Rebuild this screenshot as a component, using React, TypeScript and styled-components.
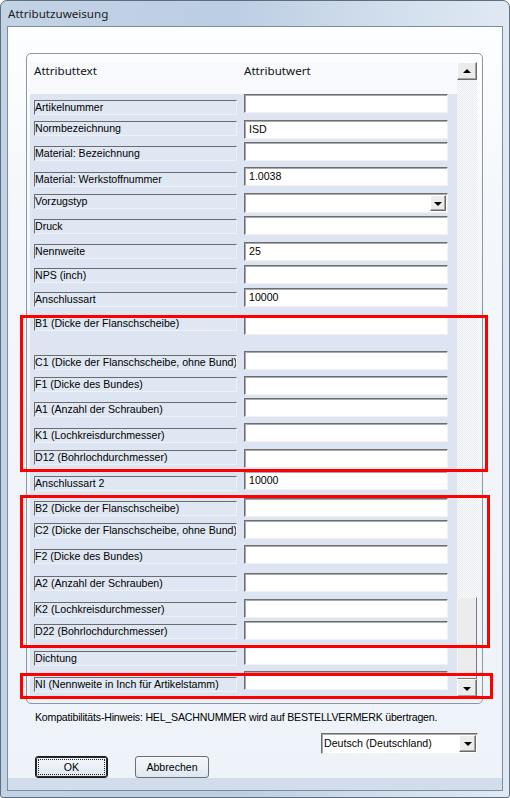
import React from "react";
import styled, { createGlobalStyle } from "styled-components";

const UI_FONT = `"Liberation Sans", Arial, sans-serif`;
const TITLE_FONT = `"Noto Sans", "Liberation Sans", sans-serif`;

type RowData = {
  label: string;
  value?: string;
  labelTop: number;
  inputTop: number;
  combo?: boolean;
};

const ROWS: RowData[] = [
  { label: "Artikelnummer", labelTop: 100, inputTop: 94 },
  { label: "Normbezeichnung", value: "ISD", labelTop: 121, inputTop: 120 },
  { label: "Material: Bezeichnung", labelTop: 146, inputTop: 142 },
  { label: "Material: Werkstoffnummer", value: "1.0038", labelTop: 172, inputTop: 167 },
  { label: "Vorzugstyp", labelTop: 194, inputTop: 193, combo: true },
  { label: "Druck", labelTop: 219, inputTop: 216 },
  { label: "Nennweite", value: "25", labelTop: 244, inputTop: 242 },
  { label: "NPS (inch)", labelTop: 268, inputTop: 265 },
  { label: "Anschlussart", value: "10000", labelTop: 292, inputTop: 288 },
  { label: "B1 (Dicke der Flanschscheibe)", labelTop: 316, inputTop: 316 },
  { label: "C1 (Dicke der Flanschscheibe, ohne Bund)", labelTop: 355, inputTop: 351 },
  { label: "F1 (Dicke des Bundes)", labelTop: 377, inputTop: 376 },
  { label: "A1 (Anzahl der Schrauben)", labelTop: 402, inputTop: 398 },
  { label: "K1 (Lochkreisdurchmesser)", labelTop: 428, inputTop: 423 },
  { label: "D12 (Bohrlochdurchmesser)", labelTop: 450, inputTop: 449 },
  { label: "Anschlussart 2", value: "10000", labelTop: 476, inputTop: 471 },
  { label: "B2 (Dicke der Flanschscheibe)", labelTop: 501, inputTop: 498 },
  { label: "C2 (Dicke der Flanschscheibe, ohne Bund)", labelTop: 523, inputTop: 520 },
  { label: "F2 (Dicke des Bundes)", labelTop: 549, inputTop: 545 },
  { label: "A2 (Anzahl der Schrauben)", labelTop: 576, inputTop: 573 },
  { label: "K2 (Lochkreisdurchmesser)", labelTop: 602, inputTop: 599 },
  { label: "D22 (Bohrlochdurchmesser)", labelTop: 624, inputTop: 621 },
  { label: "Dichtung", labelTop: 651, inputTop: 646 },
  { label: "NI (Nennweite in Inch für Artikelstamm)", labelTop: 677, inputTop: 671 },
];

const LIST_BOTTOM = 697;

const GlobalStyle = createGlobalStyle`
  html, body {
    margin: 0;
    padding: 0;
  }
  body {
    width: 510px;
    height: 798px;
    overflow: hidden;
    background: #ffffff;
    font-family: ${UI_FONT};
  }
`;

const Frame = styled.div`
  position: relative;
  width: 510px;
  height: 798px;
  box-sizing: border-box;
  border: 1px solid #5e6d80;
  border-radius: 7px 7px 3px 3px;
  background: linear-gradient(90deg, #c3d3e6 0%, #bccee3 45%, #d3dfed 78%, #e0e9f3 100%);
  padding: 0 6px 6px 6px;
  display: flex;
  flex-direction: column;
`;

const TitleBar = styled.div`
  height: 25px;
  display: flex;
  align-items: center;
  padding-left: 1px;
  font-family: ${TITLE_FONT};
  font-size: 11.6px;
  color: #1c1c1c;
`;

const Client = styled.div`
  flex: 1;
  border: 1px solid #7f8c9c;
  display: flex;
  flex-direction: column;
  min-height: 0;
`;

const Body = styled.div`
  flex: 1;
  display: flex;
  flex-direction: column;
  padding: 26px 0 0 18px;
  background: linear-gradient(180deg, #fdfeff 0%, #f4f7fb 25%, #eef3f9 100%);
`;

const BottomStrip = styled.div`
  height: 15px;
  background: #d2ddeb;
`;

const Panel = styled.div`
  width: 457px;
  height: 651px;
  box-sizing: border-box;
  border: 1px solid #8d97a3;
  border-radius: 5px;
  padding: 8px 5px 5px 3px;
  display: flex;
`;

const View = styled.div`
  flex: 1;
  display: flex;
  flex-direction: column;
  overflow: hidden;
`;

const Header = styled.div`
  height: 32px;
  display: flex;
  gap: 7px;
  padding: 1px 0 0 4px;
  box-sizing: border-box;
  font-family: ${TITLE_FONT};
  font-size: 11.6px;
  color: #111;
  background: #f7f9fc;
`;

const HeaderCell = styled.div`
  width: ${(p: { $w: number }) => p.$w}px;
  line-height: 15px;
`;

const List = styled.div`
  flex: 1;
  display: flex;
  flex-direction: column;
  background: #dce5f1;
`;

const Row = styled.div<{ $h: number }>`
  height: ${(p) => p.$h}px;
  flex: none;
  display: flex;
  align-items: flex-start;
  gap: 7px;
  padding-left: 4px;
`;

const LabelBox = styled.div<{ $mt: number }>`
  margin-top: ${(p) => p.$mt}px;
  width: 203px;
  height: 15px;
  box-sizing: border-box;
  border-style: solid;
  border-width: 1px;
  border-color: #6c6c6c #eef2f7 #eef2f7 #6c6c6c;
  background: #dfe7f2;
  font-size: 10.6px;
  line-height: 13px;
  color: #000;
  white-space: nowrap;
  overflow: hidden;
`;

const InputBox = styled.div<{ $mt: number }>`
  position: relative;
  margin-top: ${(p) => p.$mt}px;
  width: 204px;
  height: 19px;
  box-sizing: border-box;
  border-style: solid;
  border-width: 1px;
  border-color: #6e6e6e #f2f2f2 #f2f2f2 #6e6e6e;
  box-shadow: inset 1px 1px 0 #a9a9a9;
  background: #ffffff;
  padding-left: 4px;
  font-size: 10.6px;
  line-height: 17px;
  color: #000;
`;

const ComboBox = styled(InputBox)`
  height: 20px;
`;

const DropButton = styled.div`
  position: absolute;
  right: 1px;
  top: 1px;
  width: 16px;
  height: 16px;
  box-sizing: border-box;
  background: #ececec;
  border-style: solid;
  border-width: 1px;
  border-color: #ffffff #6b6b6b #6b6b6b #ffffff;
  box-shadow: inset -1px -1px 0 #a3a3a3;
  display: flex;
  align-items: center;
  justify-content: center;
`;

const ArrowDown = styled.div`
  width: 0;
  height: 0;
  border-left: 4px solid transparent;
  border-right: 4px solid transparent;
  border-top: 4px solid #000;
  margin-top: 1px;
`;

const ArrowUp = styled.div`
  width: 0;
  height: 0;
  border-left: 4px solid transparent;
  border-right: 4px solid transparent;
  border-bottom: 4px solid #000;
`;

const ScrollBar = styled.div`
  width: 20px;
  display: flex;
  flex-direction: column;
  margin-bottom: 1px;
`;

const ScrollButton = styled.div`
  height: 18px;
  flex: none;
  box-sizing: border-box;
  background: #ececec;
  border-style: solid;
  border-width: 1px;
  border-color: #ffffff #6b6b6b #6b6b6b #ffffff;
  box-shadow: inset -1px -1px 0 #a3a3a3;
  display: flex;
  align-items: center;
  justify-content: center;
`;

const Track = styled.div`
  flex: 1;
  background-color: #f7f8fa;
  background-image: conic-gradient(#e6eaef 25%, #fbfcfd 0 50%, #e6eaef 0 75%, #fbfcfd 0);
  background-size: 2px 2px;
`;

const Thumb = styled.div`
  height: 82px;
  flex: none;
  box-sizing: border-box;
  background: #ececec;
  border-style: solid;
  border-width: 1px;
  border-color: #f6f6f6 #7a7a7a #7a7a7a #f6f6f6;
`;

const Hint = styled.div`
  margin: 6px 0 0 9px;
  font-size: 10.6px;
  letter-spacing: -0.2px;
  line-height: 14px;
  color: #000;
`;

const LangRow = styled.div`
  display: flex;
  justify-content: flex-end;
  padding-right: 24px;
  margin-top: 9px;
`;

const LangCombo = styled.div`
  position: relative;
  width: 157px;
  height: 21px;
  box-sizing: border-box;
  border-style: solid;
  border-width: 1px;
  border-color: #6e6e6e #f2f2f2 #f2f2f2 #6e6e6e;
  box-shadow: inset 1px 1px 0 #a9a9a9;
  background: #fff;
  padding-left: 2px;
  font-size: 10.6px;
  line-height: 19px;
`;

const LangButton = styled(DropButton)`
  top: 1px;
  height: 17px;
  width: 17px;
`;

const ButtonRow = styled.div`
  display: flex;
  gap: 27px;
  margin: 2px 0 0 9px;
`;

const Button = styled.div<{ $default?: boolean; $w: number }>`
  position: relative;
  width: ${(p) => p.$w}px;
  height: 22px;
  box-sizing: border-box;
  border: 1px solid ${(p) => (p.$default ? "#1a1a1a" : "#6f6f6f")};
  border-radius: 3px;
  background: linear-gradient(180deg, #f4f8fc 0%, #eaf0f7 50%, #dde6f0 100%);
  display: flex;
  align-items: center;
  justify-content: center;
  font-size: 10.6px;
  color: #000;
  box-shadow: ${(p) => (p.$default ? "inset 0 0 0 1px #2b2b2b" : "none")};
`;

const FocusRing = styled.div`
  position: absolute;
  inset: 2px;
  border: 1px dotted #222;
  border-radius: 1px;
`;

const Annotation = styled.div<{ $x: number; $y: number; $w: number; $h: number }>`
  position: absolute;
  left: ${(p) => p.$x - 1}px;
  top: ${(p) => p.$y - 1}px;
  width: ${(p) => p.$w}px;
  height: ${(p) => p.$h}px;
  box-sizing: border-box;
  border: 3px solid #ff0000;
  pointer-events: none;
`;

const AttributeRow: React.FC<{ row: RowData; height: number }> = ({ row, height }) => {
  const top = Math.min(row.labelTop, row.inputTop);
  const Field = row.combo ? ComboBox : InputBox;
  return (
    <Row $h={height}>
      <LabelBox $mt={row.labelTop - top}>{row.label}</LabelBox>
      <Field $mt={row.inputTop - top}>
        {row.value}
        {row.combo && (
          <DropButton>
            <ArrowDown />
          </DropButton>
        )}
      </Field>
    </Row>
  );
};

const App: React.FC = () => {
  return (
    <>
      <GlobalStyle />
      <Frame>
        <TitleBar>Attributzuweisung</TitleBar>
        <Client>
          <Body>
            <Panel>
              <View>
                <Header>
                  <HeaderCell $w={203}>Attributtext</HeaderCell>
                  <HeaderCell $w={204}>Attributwert</HeaderCell>
                </Header>
                <List>
                  {ROWS.map((row, i) => {
                    const top = Math.min(row.labelTop, row.inputTop);
                    const next = ROWS[i + 1];
                    const nextTop = next ? Math.min(next.labelTop, next.inputTop) : LIST_BOTTOM;
                    return <AttributeRow key={row.label} row={row} height={nextTop - top} />;
                  })}
                </List>
              </View>
              <ScrollBar>
                <ScrollButton>
                  <ArrowUp />
                </ScrollButton>
                <Track />
                <Thumb />
                <ScrollButton>
                  <ArrowDown />
                </ScrollButton>
              </ScrollBar>
            </Panel>
            <Hint>Kompatibilitäts-Hinweis: HEL_SACHNUMMER wird auf BESTELLVERMERK übertragen.</Hint>
            <LangRow>
              <LangCombo>
                Deutsch (Deutschland)
                <LangButton>
                  <ArrowDown />
                </LangButton>
              </LangCombo>
            </LangRow>
            <ButtonRow>
              <Button $default $w={73}>
                <FocusRing />
                OK
              </Button>
              <Button $w={74}>Abbrechen</Button>
            </ButtonRow>
          </Body>
          <BottomStrip />
        </Client>
        <Annotation $x={20} $y={315} $w={468} $h={157} />
        <Annotation $x={20} $y={495} $w={470} $h={153} />
        <Annotation $x={20} $y={673} $w={473} $h={26} />
      </Frame>
    </>
  );
};

export default App;
